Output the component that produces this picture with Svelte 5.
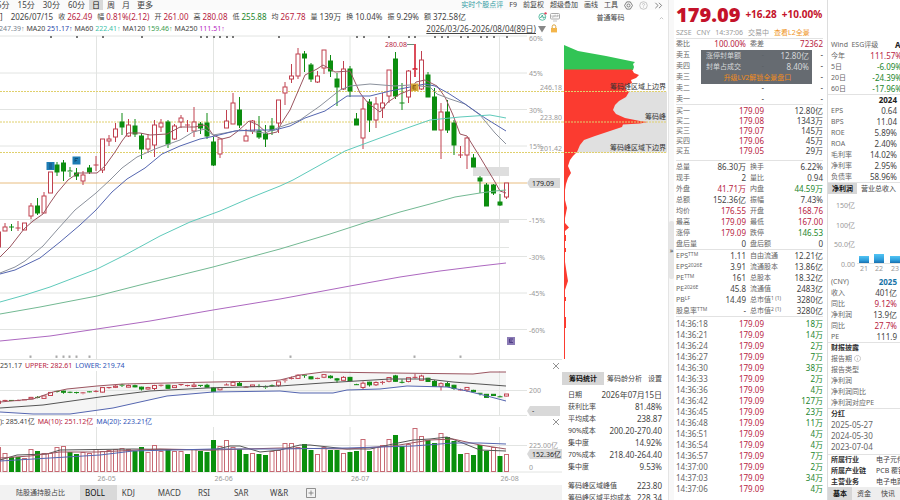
<script lang="ts">
	type Tone = 'up' | 'down' | '';

	const periods = ['5分', '15分', '30分', '60分', '日', '周', '月', '更多'];
	const tools = ['前复权', '超级叠加', '画线', '工具'];
	const indicators = ['BOLL', 'KDJ', 'MACD', 'RSI', 'SAR', 'W&R'];

	let period = $state('日');
	let indicator = $state('BOLL');
	let chipTab = $state('筹码统计');
	let profitTab = $state('净利润');
	let sideTab = $state('基本');

	const quoteFields: [string, string, Tone][] = [
		['收', '262.49', 'up'],
		['幅', '0.81%(2.12)', 'up'],
		['开', '261.00', 'up'],
		['高', '280.08', 'up'],
		['低', '255.88', 'down'],
		['均', '267.78', 'up'],
		['量', '139万', ''],
		['换', '10.04%', ''],
		['振', '9.29%', ''],
		['额', '372.58亿', '']
	];

	const averages = [
		['', '247.39', 'ma10'],
		['MA20', '251.17', 'ma20'],
		['MA60', '222.41', 'ma60'],
		['MA120', '159.46', 'ma120'],
		['MA250', '111.51', 'ma250']
	];

	// high, body top, body bottom, low, rising
	const candles: number[][] = [
		[232, 232, 247, 247, 1], [223, 227, 231, 231, 1], [224, 227, 227, 231, 0], [221, 228, 228, 231, 1],
		[223, 223, 230, 230, 1], [203, 206, 216, 219, 1], [198, 206, 213, 215, 0], [192, 196, 213, 213, 1],
		[172, 172, 193, 193, 1], [162, 165, 172, 176, 0], [160, 163, 171, 181, 0], [167, 171, 172, 177, 0],
		[168, 173, 176, 180, 0], [171, 175, 181, 185, 1], [165, 168, 172, 174, 0], [156, 165, 165, 171, 1],
		[139, 139, 170, 173, 1], [135, 139, 141, 146, 1], [123, 129, 137, 142, 1], [113, 122, 127, 135, 0],
		[119, 125, 136, 137, 1], [119, 126, 134, 137, 0], [133, 136, 149, 159, 0], [134, 139, 149, 153, 1],
		[120, 125, 145, 157, 1], [119, 123, 127, 132, 1], [120, 122, 144, 148, 0], [124, 126, 139, 140, 1],
		[115, 118, 122, 128, 1], [120, 125, 125, 132, 1], [107, 122, 131, 137, 1], [122, 124, 128, 134, 0],
		[113, 123, 136, 139, 0], [137, 142, 165, 166, 0], [139, 139, 154, 158, 1], [110, 121, 128, 128, 1],
		[93, 103, 124, 124, 1], [97, 110, 125, 128, 0], [129, 136, 141, 141, 1], [120, 121, 131, 134, 1],
		[116, 131, 137, 139, 0], [125, 134, 139, 147, 0], [118, 126, 130, 135, 0], [100, 100, 123, 133, 1],
		[82, 87, 93, 105, 1], [64, 76, 79, 83, 1], [48, 54, 76, 79, 1], [51, 54, 58, 72, 0],
		[63, 65, 79, 82, 0], [71, 76, 82, 83, 1], [50, 50, 68, 74, 1], [55, 61, 71, 77, 0],
		[73, 79, 87, 106, 0], [61, 69, 89, 90, 1], [66, 69, 91, 97, 0], [113, 119, 125, 125, 0],
		[97, 109, 138, 149, 1], [99, 102, 120, 132, 0], [97, 104, 120, 128, 1], [93, 103, 108, 118, 1],
		[70, 70, 96, 103, 1], [52, 59, 96, 99, 0], [83, 103, 103, 110, 0], [70, 71, 97, 103, 1],
		[44, 69, 70, 77, 1], [51, 60, 89, 90, 1], [72, 75, 97, 97, 0], [88, 97, 130, 130, 0],
		[103, 112, 130, 159, 1], [100, 112, 130, 133, 0], [120, 123, 145, 155, 0], [146, 155, 155, 158, 1],
		[137, 138, 155, 169, 1], [154, 158, 167, 167, 0], [176, 178, 181, 193, 0], [183, 185, 206, 206, 0],
		[184, 185, 193, 195, 0], [194, 202, 205, 206, 0], [183, 183, 197, 199, 1]
	];
	const peak = 64;

	// top edge of each volume bar, negative when the bar is a falling day
	const volumes = [
		447, 453, -457, -457, 458, 449, -451, 453, 453, 447, 446, -452, -454, 452, 453, 449, 451, 450, 449, 448,
		449, -451, -447, 452, 445, 451, -449, 451, 451, -454, 449, -451, -452, -440, 446, 440, 447, -449, -454, 453,
		-454, -455, 451, 450, 443, 443, 447, -444, -450, 454, 447, -450, -450, 453, -452, -451, 439, -451, 447, 445,
		439, -435, -446, 444, 428, 436, -440, -443, 433, -437, -441, -454, 453, -455, -445, -451, 447, -456, 454
	];

	const cx = (i: number) => Math.round((5 + 6.51 * (i - 1)) * 2) / 2;
	const mini = (y: number) => 367.3 + 0.146 * y;

	const monthLines = [96.5, 213.5, 350, 499.5];
	const months = ['26-05', '26-06', '26-07', '26-08'];
	const percents: [number, string][] = [
		[36, '60%'], [73, '45%'], [109.5, '30%'], [146, '15%'],
		[219.5, '-15%'], [256.5, '-30%'], [293, '-45%'], [329.5, '-60%']
	];
	const chipLevels: [number, string, string][] = [
		[91.5, '246.18', '筹码峰区域上边界'],
		[122, '223.80', '筹码峰'],
		[152.5, '201.42', '筹码峰区域下边界']
	];

	const topMarks = [50, 76, 102, 141, 200, 206, 213, 219, 226, 232, 278, 356, 363, 388, 408, 414, 434, 441, 447, 460, 467, 480, 486, 493, 506];
	const bottomMarks = [30, 56, 63, 69, 76, 89, 290, 414, 460];

	const mainLines = [
		['ma5', '0,257 10,247 24,229 33,221 43,214 50,203 57,193 68,180 78,173 97,173 105,166 115,152 122,141 128,133 140,133 150,135 167,134 180,127 195,127 203,125 207,126 213,135 222,139 230,137 238,131 249,121 258,125 268,134 277,132 281,124 290,110 305,75 317,69 323,65 335,72 350,71 360,93 368,103 380,112 388,102 400,94 410,90 416,82 425,80 437,86 445,97 453,115 460,134 467,136 480,157 495,182 500,191 506,193'],
		['ma10', '0,273 15,267 25,261 43,246 57,230 75,210 96,193 110,180 122,168 137,157 155,149 180,140 193,132 205,129 213,135 225,133 240,130 265,133 280,127 300,120 320,106 340,90 350,86 370,84 395,86 410,85 430,87 437,94 450,99 465,104 480,115 495,133 506,144'],
		['ma20', '0,274 15,270 40,258 60,242 80,225 96,210 112,192 127,179 145,168 162,154 180,146 200,139 215,136 235,131 255,130 275,130 290,126 305,118 325,111 347,96 370,96 390,91 410,87 425,84 435,86 448,93 465,104 485,118 506,131'],
		['ma60', '0,302 25,295 50,287 97,269 125,255 160,236 190,222 220,211 250,198 280,186 293,180 320,165 345,151 380,138 410,127 430,120 460,117 490,115 506,118'],
		['ma120', '0,314 40,307 97,296 140,285 213,267 280,249 330,234 370,221 400,212 430,204 455,197 480,193 495,191 506,190'],
		['ma250', '0,341 50,336 97,329 150,321 213,310 280,299 350,286 400,277 440,271 480,266 506,263']
	];

	const bollUpper = '0,402 33,399 53,392 67,389 97,386 123,384 213,382 270,381 280,380 300,375 323,372 393,373 473,374 490,372 506,372';
	const bollLower = '506,401 487,396 467,391 447,387 407,386 380,389 347,390 333,393 300,393 280,391 213,392 167,396 113,408 70,414 33,414 0,412';
	const bollMid = '0,408 43,405 100,397 150,391 207,388 280,386 323,383 390,379 427,379 453,382 506,386';

	const volumeLines = [
		['dark', '0,460 17,455 47,454 60,450 133,449 213,450 230,446 240,446 260,452 280,450 300,445 310,445 347,449 370,449 393,444 413,440 430,439 447,437 460,442 480,450 506,451'],
		['ma5', '0,458 30,456 60,452 97,452 160,449 213,450 280,448 347,449 393,446 430,440 453,439 480,445 506,449'],
		['ma20', '0,461 50,458 100,455 133,451 213,449 280,449 347,448 413,446 453,443 480,443 506,444']
	];

	const chipStats = [
		['日期', '2026年07月15日'],
		['获利比率', '81.48%'],
		['平均成本', '238.87'],
		['90%成本', '200.20-270.40'],
		['集中度', '14.92%'],
		['70%成本', '218.40-264.40'],
		['集中度', '9.53%'],
		['筹码峰区域峰值', '223.80'],
		['筹码峰区域平均成本', '228.34']
	];

	const asks = ['卖五', '卖四', '卖三', '卖二', '卖一'];
	const bids = [
		['买一', '179.09', '12.80亿'],
		['买二', '179.08', '1343万'],
		['买三', '179.07', '145万'],
		['买四', '179.06', '45万'],
		['买五', '179.05', '29万']
	];

	const trading: [string, string, Tone, string, string, Tone][] = [
		['总量', '86.30万', '', '换手', '6.22%', ''],
		['现手', '2', '', '量比', '0.94', ''],
		['外盘', '41.71万', 'up', '内盘', '44.59万', 'down'],
		['总额', '152.36亿', '', '振幅', '7.43%', ''],
		['均价', '176.55', 'up', '开盘', '168.76', 'up'],
		['最高', '179.09', 'up', '最低', '167.00', 'up'],
		['涨停', '179.09', 'up', '跌停', '146.53', 'down'],
		['盘后量', '0', '', '盘后额', '0', '']
	];

	// label, superscript, value, label, superscript, value
	const valuation = [
		['EPS', 'TTM', '1.11', '自由流通', '', '12.21亿'],
		['EPS', '2026E', '3.91', '流通股本', '', '13.86亿'],
		['PE', 'TTM', '161', '总股本', '', '18.32亿'],
		['PE', '2026E', '45.8', '流通值', '', '2483亿'],
		['PB', 'LF', '14.49', '总市值', '1 (1)', '3280亿'],
		['股息率', 'TTM', '-', '总市值', '2 (1)', '3280亿']
	];

	const ticks = [
		['14:36:18', '18万'], ['14:36:21', '14万'], ['14:36:24', '2万'], ['14:36:27', '7万'],
		['14:36:30', '38万'], ['14:36:33', '2万'], ['14:36:36', '4万'], ['14:36:42', '127万'],
		['14:36:45', '23万'], ['14:36:48', '11万'], ['14:36:51', '4万'], ['14:36:54', '4万'],
		['14:36:57', '7万'], ['14:37:00', '2万'], ['14:37:03', '34万'], ['14:37:06', '4万']
	];

	const returns: [string, string, Tone][] = [
		['今年', '111.57%', 'up'],
		['5日', '-6.09%', 'down'],
		['20日', '-24.39%', 'down'],
		['60日', '-17.96%', 'down']
	];
	const ratios = [
		['EPS', '0.64'],
		['BPS', '11.04'],
		['ROE', '5.89%'],
		['ROA', '2.40%'],
		['毛利率', '14.02%'],
		['净利率', '2.95%'],
		['负债率', '58.96%']
	];
	const forecast: [string, string, Tone][] = [
		['收入', '401亿', ''],
		['同比', '9.12%', 'up'],
		['净利润', '13.9亿', ''],
		['同比', '27.7%', 'up'],
		['PE', '111.9', '']
	];
	const reports = ['报告期', '报告类型', '净利润', '净利润同比', '净利润对应PE'];
	const dividends = ['2025-05-27', '2024-05-30', '2023-07-04'];
	const industry = [
		['所属行业', '电子元件'],
		['所属产业链', 'PCB 覆铜板'],
		['主营业务', '电子电路']
	];
</script>

<div class="terminal">
	<section class="charts">
		<nav class="toolbar">
			<div class="periods">
				{#each periods as p}
					<button class:active={period === p} onclick={() => (period = p)}>{p}</button>
				{/each}
			</div>
			<div class="tools">
				<button class="review">实时个股点评</button>
				<button>F9</button>
				{#each tools as t}
					<button>{t}</button>
				{/each}
				<button class="icon" aria-label="设置">
					<svg viewBox="0 0 10 10" width="9" height="9">
						<path d="M3 1h4l2.4 4L7 9H3L.6 5Z" />
						<circle cx="5" cy="5" r="1.7" />
					</svg>
				</button>
				<button class="icon faint" aria-label="帮助">
					<svg viewBox="0 0 10 10" width="9" height="9">
						<circle cx="5" cy="5" r="4.2" />
						<path d="M3.8 4q0-1.3 1.2-1.3T6.2 4q0 .7-1.2 1.3v.8M5 7v.7" />
					</svg>
				</button>
				<button class="icon" aria-label="展开">
					<svg viewBox="0 0 10 10" width="9" height="9"><path d="M1.5 2l3 3-3 3M5.5 2l3 3-3 3" /></svg>
				</button>
			</div>
		</nav>

		<div class="panes">
			<div class="chart-pane">
				<div class="info">
					<span>]</span>
					<span class="date">2026/07/15</span>
					{#each quoteFields as [label, value, tone]}
						<span class="field"><small>{label}</small><b class={tone}>{value}</b></span>
					{/each}
					<span class="info-icons">
						<svg viewBox="0 0 10 10" width="9" height="9">
							<circle cx="4.8" cy="5.4" r="3.8" fill="none" stroke="#4db79c" />
							<path d="M2.3 6h1.3l1.2-2.6L6 7l.6-1.2h1" fill="none" stroke="#3aa88b" />
							<circle cx="8.4" cy="1.5" r="1.3" fill="#e3445c" />
						</svg>
						<svg viewBox="0 0 10 10" width="10" height="10">
							<rect x=".5" y="1.5" width="9" height="5.5" rx="1" fill="none" stroke="#aaa" />
							<path d="M2 3.2v2h1.4v-2M4.6 5.2v-2h1.2v2M7 5.2v-2h1.2v1H7M3 9h4" fill="none" stroke="#aaa" stroke-width=".7" />
						</svg>
					</span>
				</div>

				<div class="averages">
					{#each averages as [name, value, cls]}
						<span>{name} <b class={cls}>{value}<i>↑</i></b></span>
					{/each}
					<button class="range">2026/03/26-2026/08/04(89日)</button>
					<svg class="caret" viewBox="0 0 8 8" width="8" height="8"><path d="M0 1h8L4 7.5Z" fill="#888" /></svg>
					<svg class="lock" viewBox="0 0 8 9" width="8" height="9">
						<path d="M2.2 4V2.6a1.8 1.8 0 0 1 3.6 0V4" fill="none" stroke="#d9a441" />
						<rect x="1" y="4" width="6" height="4.4" fill="#f3b54a" />
					</svg>
				</div>

				<svg class="plot" viewBox="0 34 562 326">
					{#each percents as [y, label]}
						<line class="grid" x1="0" x2="527" y1={y} y2={y} />
						<text class="axis" x="529" y={y < 40 ? y + 5 : y + 3}>{label}</text>
					{/each}
					{#each monthLines as x}
						<line class="grid" x1={x} x2={x} y1="36" y2="359" />
					{/each}
					<line class="grid" x1="0" x2="562" y1="359.5" y2="359.5" />
					<rect class="band" x="30" y="219" width="479" height="4" />
					<rect class="band" x="473" y="167" width="36" height="9" />
					<line class="grid" x1="0" x2="509" y1="247.5" y2="247.5" />
					{#each chipLevels as [y, price]}
						<line class="level" x1="0" x2="562" y1={y} y2={y} />
						<text class="axis" x="562" y={y - 2} text-anchor="end">{price}</text>
					{/each}
					<line class="current" x1="0" x2="527" y1="183" y2="183" />

					{#each topMarks as x}
						<rect class="mark" {x} y="36" width="2" height="2" />
					{/each}
					{#each bottomMarks as x}
						<rect class="dot" x={x - 0.5} y="355.5" width="2" height="2.4" />
					{/each}

					{#each candles as [high, top, bottom, low, rising], i}
						<g class={i === peak ? 'peak' : rising ? 'rise' : 'fall'}>
							<line x1={cx(i)} x2={cx(i)} y1={high} y2={top} />
							<line x1={cx(i)} x2={cx(i)} y1={bottom} y2={low} />
							{#if bottom - top < 2}
								<line x1={cx(i) - 2.5} x2={cx(i) + 2.5} y1={top} y2={top} />
							{:else}
								<rect x={cx(i) - 2} y={top} width="4" height={bottom - top} />
							{/if}
						</g>
					{/each}

					{#each mainLines as [cls, points]}
						<polyline class={cls} {points} />
					{/each}

					<g class="event">
						<rect x="46.5" y="162" width="8" height="8" />
						<path d="M49 164h3M49 166h3M49 168h3" />
						<rect x="72.5" y="156.5" width="8" height="8" />
						<path d="M75 162v-3.5h3M75 160.5h2" />
					</g>
					<g class="event gold">
						<rect x="411" y="83.5" width="7.5" height="7.5" />
						<path d="M416 85.5h-3v3.5h3M413 87h2.5" />
					</g>
					<g class="event purple">
						<rect x="507" y="337" width="8" height="8" />
						<path d="M513 339h-3.5v3.5h3.5M510 341h2" />
					</g>

					<text class="high" x="385" y="47">280.08</text>
					<line class="high-line" x1="407" x2="414" y1="44.5" y2="44.5" />

					<path class="tag" d="M527 183l3-5h30v10h-30z" />
					<text class="tag-text" x="532" y="186">179.09</text>
				</svg>

				<div class="legend">
					<span>251.17</span>
					<span class="up">UPPER: 282.61</span>
					<span class="blue">LOWER: 219.74</span>
					<button class="close" aria-label="关闭 BOLL">
						<svg viewBox="0 0 8 8" width="8" height="8"><path d="M1 1l6 6M7 1L1 7" /></svg>
					</button>
				</div>

				<svg class="plot" viewBox="0 371 562 45">
					<polygon class="cloud" points="{bollUpper} {bollLower}" />
					<line class="grid" x1="0" x2="527" y1="390.5" y2="390.5" />
					{#each monthLines as x}
						<line class="grid" x1={x} x2={x} y1="371" y2="416" />
					{/each}
					<line class="grid" x1="0" x2="527" y1="415.5" y2="415.5" />
					{#each candles as [high, top, bottom, low, rising], i}
						<g class={rising ? 'rise' : 'fall'}>
							<line x1={cx(i)} x2={cx(i)} y1={mini(high)} y2={mini(top)} />
							<line x1={cx(i)} x2={cx(i)} y1={mini(bottom)} y2={mini(low)} />
							{#if bottom - top < 8}
								<line x1={cx(i) - 2.5} x2={cx(i) + 2.5} y1={mini(top)} y2={mini(top)} />
							{:else}
								<rect x={cx(i) - 2} y={mini(top)} width="4" height={mini(bottom) - mini(top)} />
							{/if}
						</g>
					{/each}
					<polyline class="ma5" points={bollUpper} />
					<polyline class="dark" points={bollMid} />
					<polyline class="ma20" points={bollLower} />
					<text class="axis" x="529" y="393">200</text>
					<path class="tag" d="M527 411l3-5h30v10h-30z" />
					<text class="tag-text" x="532" y="413">-</text>
				</svg>

				<div class="legend">
					<span>): 285.41亿</span>
					<span class="up">MA(10): 251.12亿</span>
					<span class="blue">MA(20): 223.21亿</span>
					<button class="close" aria-label="关闭成交额">
						<svg viewBox="0 0 8 8" width="8" height="8"><path d="M1 1l6 6M7 1L1 7" /></svg>
					</button>
				</div>

				<svg class="plot" viewBox="0 427 562 58">
					<line class="grid" x1="0" x2="527" y1="445.5" y2="445.5" />
					{#each monthLines as x, i}
						<line class="grid" x1={x} x2={x} y1="427" y2="472" />
						<text class="axis" x={x + 1} y="481">{months[i]}</text>
					{/each}
					<line class="grid" x1="0" x2="562" y1="472" y2="472" />
					{#each volumes as v, i}
						<rect
							class={v > 0 ? 'bar rise' : 'bar fall'}
							x={cx(i) - 2}
							y={Math.abs(v) + 0.5}
							width="4"
							height={471 - Math.abs(v)}
						/>
					{/each}
					{#each volumeLines as [cls, points]}
						<polyline class={cls} {points} />
					{/each}
					<text class="axis" x="529" y="448">225.00亿</text>
					<text class="axis" x="529" y="470">0</text>
					<path class="tag" d="M527 454l3-5h32v10h-32z" />
					<text class="tag-text" x="532" y="457">152.36亿</text>
				</svg>

				<nav class="indicators">
					<button class="first">陆股通持股占比</button>
					{#each indicators as name}
						<button class:active={indicator === name} onclick={() => (indicator = name)}>{name}</button>
					{/each}
					<button class="add" aria-label="添加指标">
						<svg viewBox="0 0 10 10" width="10" height="10"><path d="M.5.5h9v9h-9zM5 2.5v5M2.5 5h5" /></svg>
					</button>
				</nav>
			</div>

			<aside class="chips">
				<header>
					<span>普通筹码</span>
					<svg viewBox="0 0 6 6" width="5" height="5"><path d="M1 5l2-2 2 2" fill="none" stroke="#bbb" /></svg>
				</header>
				<svg class="plot" viewBox="562 24 106 348">
					<rect class="zone" x="564" y="91.5" width="103" height="61" />
					<path
						class="chip-green"
						d="M564 45L571 48 578 51 606 56 635 62 633 64 634 67 633 70H564Z"
					/>
					<path
						class="chip-red"
						d="M564 69.5H632L634 73 639 75 636 78 631 80 632 83 625 86 626 90 629 92 626 97 619 101 615 105 613 110 616 114 625 118 640 121 648 122 640 123.5 623 124.5 622 127 610 131 595 136 584 140 580 145 577 152 573 156 570 160 568 166 571 173 568 178 566 184 565 190V200L567 208 565 218V223L569 227.500 565 231V235H566V241H565V248H566V252H565V262L567 275 568 281 565 290V297H566V301H565V317H566V328H565V359H564Z"
					/>
					{#each chipLevels as [y, , label]}
						<line class="level" x1="562" x2="667" y1={y} y2={y} />
						<text class="chip-label" x="666" y={y - 3} text-anchor="end">{label}</text>
					{/each}
				</svg>
				<nav class="chip-tabs">
					{#each ['筹码统计', '筹码龄分析', '设置'] as tab}
						<button class:active={chipTab === tab} onclick={() => (chipTab = tab)}>{tab}</button>
					{/each}
				</nav>
				<table class="chip-table">
					<tbody>
						{#each chipStats as [label, value], i}
							<tr class:spaced={i === 7}>
								<th>{label}</th>
								<td>{value}</td>
							</tr>
						{/each}
					</tbody>
				</table>
			</aside>
		</div>
	</section>

	<div class="splitter"><button aria-label="收起">»</button></div>

	<section class="quote">
		<div class="price">
			<strong>179.09</strong>
			<span>+16.28</span>
			<span>+10.00%</span>
		</div>
		<div class="status">
			<span>SZSE</span><span>CNY</span><span>14:37:06</span><span>交易中</span>
			<a href="#l2">查看L2全景</a>
		</div>

		<div class="book">
			<table class="pairs head">
				<tbody>
					<tr>
						<th>委比</th>
						<td class="up">100.00%</td>
						<th>委差</th>
						<td class="up">72362</td>
					</tr>
				</tbody>
			</table>
			<table class="depth">
				<tbody>
					{#each asks as label}
						<tr>
							<th>{label}</th>
							<td>-</td>
							<td>-</td>
						</tr>
					{/each}
				</tbody>
			</table>
			<div class="tooltip">
				<p><span>涨停封单额</span><span>12.80亿</span></p>
				<p><span>封单占成交</span><span>8.40%</span></p>
				<a href="#lv2">升级LV2解锁全景盘口</a>
			</div>
		</div>
		<table class="depth bids">
			<tbody>
				{#each bids as [label, price, size]}
					<tr>
						<th>{label}</th>
						<td class="up">{price}</td>
						<td>{size}</td>
					</tr>
				{/each}
			</tbody>
		</table>
		<table class="pairs">
			<tbody>
				{#each trading as [l1, v1, t1, l2, v2, t2]}
					<tr>
						<th>{l1}</th>
						<td class={t1}>{v1}</td>
						<th>{l2}</th>
						<td class={t2}>{v2}</td>
					</tr>
				{/each}
			</tbody>
		</table>
		<table class="pairs">
			<tbody>
				{#each valuation as [l1, s1, v1, l2, s2, v2]}
					<tr>
						<th>{l1}<sup>{s1}</sup></th>
						<td>{v1}</td>
						<th>{l2}<sup>{s2}</sup></th>
						<td>{v2}</td>
					</tr>
				{/each}
			</tbody>
		</table>
		<table class="depth ticks">
			<tbody>
				{#each ticks as [time, size]}
					<tr>
						<td>{time}</td>
						<td class="up">179.09</td>
						<td class="down">{size}</td>
					</tr>
				{/each}
			</tbody>
		</table>
	</section>

	<aside class="side">
		<div class="group esg">
			<div class="row"><span>Wind&ensp;ESG评级</span><b>AA</b></div>
			{#each returns as [label, value, tone]}
				<div class="row"><span>{label}</span><em class={tone}>{value}</em></div>
			{/each}
		</div>
		<div class="group">
			<div class="row"><span></span><b>2024</b></div>
			{#each ratios as [label, value]}
				<div class="row"><span>{label}</span><em>{value}</em></div>
			{/each}
		</div>
		<nav class="profit-tabs">
			{#each ['净利润', '营业总收入'] as tab}
				<button class:active={profitTab === tab} onclick={() => (profitTab = tab)}>{tab}</button>
			{/each}
		</nav>
		<svg class="profit" viewBox="828 193 72 82">
			<defs>
				<linearGradient id="bar" x1="0" x2="0" y1="0" y2="1">
					<stop offset="0" stop-color="#52c4f4" />
					<stop offset="0.6" stop-color="#2f9fdc" />
					<stop offset="1" stop-color="#1a6fae" />
				</linearGradient>
			</defs>
			<text class="axis" x="855" y="207" text-anchor="end">150亿</text>
			<text class="axis" x="855" y="227" text-anchor="end">100亿</text>
			<text class="axis" x="855" y="246" text-anchor="end">50.0亿</text>
			<text class="axis" x="855" y="266" text-anchor="end">0.00</text>
			<line class="grid" x1="857" x2="900" y1="262.5" y2="262.5" />
			<rect x="859" y="255" width="10" height="7" fill="url(#bar)" />
			<rect x="874" y="253" width="10" height="9" fill="url(#bar)" />
			<rect x="890" y="255" width="10" height="7" fill="url(#bar)" />
			<text class="axis" x="864" y="270" text-anchor="middle">21</text>
			<text class="axis" x="879" y="270" text-anchor="middle">22</text>
			<text class="axis" x="895" y="270" text-anchor="middle">23</text>
		</svg>
		<div class="group">
			<div class="row"><span>(CNY)</span><b class="year">2025</b></div>
			{#each forecast as [label, value, tone]}
				<div class="row"><span>{label}</span><em class={tone}>{value}</em></div>
			{/each}
		</div>
		<div class="group">
			<h3>财报披露</h3>
			{#each reports as label, i}
				<div class="row">
					<span>
						{label}
						{#if i === 0}
							<svg viewBox="0 0 8 8" width="7" height="7">
								<path d="M4 .5a3.500 3.500 0 1 0 .01 0ZM4 3.500V6M4 2v.6" fill="none" stroke="#aaa" stroke-width=".7" />
							</svg>
						{/if}
					</span>
				</div>
			{/each}
		</div>
		<div class="group dividends">
			<h3>分红</h3>
			{#each dividends as date}
				<div class="row"><em>{date}</em></div>
			{/each}
		</div>
		<div class="group industry">
			{#each industry as [label, value]}
				<div class="row"><h3>{label}</h3><span>{value}</span></div>
			{/each}
		</div>
		<nav class="side-tabs">
			{#each ['基本', '资金', '快讯'] as tab}
				<button class:active={sideTab === tab} onclick={() => (sideTab = tab)}>{tab}</button>
			{/each}
		</nav>
	</aside>
</div>

<style>
	:global(body) {
		margin: 0;
		background: #fff;
		overflow: hidden;
	}

	.terminal {
		display: grid;
		grid-template-columns: minmax(0, 1fr) 6px 154px 72px;
		height: 100vh;
		overflow: hidden;
		font-family: 'Noto Sans', 'Noto Sans CJK SC', sans-serif;
		font-size: 8px;
		line-height: 11px;
		color: #444;
		white-space: nowrap;
	}

	button {
		padding: 0;
		border: 0;
		background: none;
		font: inherit;
		color: inherit;
		cursor: pointer;
		white-space: nowrap;
	}

	a {
		text-decoration: none;
	}

	b,
	em,
	i,
	small {
		font: inherit;
	}

	.up {
		color: #b8243f;
	}

	.down {
		color: #23862b;
	}

	.blue {
		color: #2f55b8;
	}

	.charts {
		display: flex;
		flex-direction: column;
		min-width: 0;
		min-height: 0;
		overflow: hidden;
	}

	.toolbar {
		display: flex;
		justify-content: space-between;
		height: 10px;
		line-height: 10px;
		background: #fafafa;
	}

	.periods,
	.tools {
		display: flex;
	}

	.periods button {
		padding: 0 4px;
		font-size: 8px;
	}

	.periods button:first-child {
		margin-left: -7px;
	}

	.periods button:nth-child(n + 5) {
		padding: 0 3px;
		margin-right: 1px;
	}

	.periods button.active {
		background: #d9d9d9;
		color: #111;
	}

	.tools {
		gap: 6px;
		padding-right: 5px;
		font-size: 7px;
	}

	.tools .review {
		color: #2e9aa3;
	}

	.tools .icon {
		display: flex;
		align-items: center;
	}

	.tools .icon svg {
		fill: none;
		stroke: #666;
		stroke-width: 0.9;
	}

	.tools .faint svg {
		stroke: #bbb;
	}

	.panes {
		display: grid;
		grid-template-columns: minmax(0, 562fr) minmax(0, 106fr);
		flex: 1;
		min-height: 0;
	}

	.chart-pane {
		display: flex;
		flex-direction: column;
		min-width: 0;
	}

	.plot {
		display: block;
		width: 100%;
		height: auto;
		flex: none;
	}

	.info {
		display: flex;
		gap: 5px;
		height: 13px;
		line-height: 13px;
	}

	.date {
		margin-left: 3px;
	}

	.field {
		display: flex;
		gap: 2px;
	}

	.field small {
		font-size: 7px;
	}

	.info-icons {
		display: flex;
		gap: 3px;
		align-items: center;
		margin-left: auto;
		padding-right: 2px;
	}

	.averages {
		display: flex;
		gap: 2px;
		height: 11px;
		font-size: 7px;
		align-items: center;
	}

	.averages span:first-child {
		margin-left: -1px;
	}

	.averages i {
		font-family: 'Liberation Sans', sans-serif;
	}

	.range {
		margin-left: auto;
		font-size: 8px;
		line-height: 9px;
		text-decoration: underline;
	}

	.lock {
		margin: 0 4px 0 2px;
	}

	.ma5 {
		color: #9b5560;
		stroke: #9b5560;
	}

	.ma10 {
		color: #76818c;
		stroke: #8b919c;
	}

	.ma20 {
		color: #2743a8;
		stroke: #5566b0;
	}

	.ma60 {
		color: #3dbfa9;
		stroke: #5fcabb;
	}

	.ma120 {
		color: #3c9e50;
		stroke: #73b993;
	}

	.ma250 {
		color: #b526c1;
		stroke: #ad68c0;
	}

	.dark {
		stroke: #555;
	}

	polyline {
		fill: none;
		stroke-width: 1;
	}

	.grid {
		stroke: #e2e4e2;
		stroke-width: 1;
	}

	.band {
		fill: #dedede;
	}

	.level {
		stroke: #e0d06c;
		stroke-width: 1;
		stroke-dasharray: 2 1;
	}

	.current {
		stroke: #e8bd80;
		stroke-width: 1;
	}

	.axis {
		font-size: 7px;
		fill: #999;
	}

	.mark {
		fill: #777;
	}

	.dot {
		fill: #aaa;
	}

	.rise line,
	.rise rect {
		stroke: #c0404f;
		fill: #fff;
		stroke-width: 1;
	}

	.fall line,
	.fall rect {
		stroke: #0f8a12;
		fill: #0a900d;
		stroke-width: 1;
	}

	.peak line,
	.peak rect {
		stroke: #d01224;
		fill: #d01224;
		stroke-width: 1.5;
	}

	.bar.rise {
		stroke: #c76a74;
		fill: #fff;
	}

	.bar.fall {
		stroke: #0a900d;
		fill: #0a900d;
	}

	.event rect {
		fill: #1e7cb4;
	}

	.event path {
		fill: none;
		stroke: #0c4770;
		stroke-width: 0.8;
	}

	.gold rect {
		fill: #d6a63c;
	}

	.gold path {
		stroke: #7c5510;
	}

	.purple rect {
		fill: #8b7bb5;
	}

	.purple path {
		stroke: #43307c;
	}

	.high {
		font-size: 7px;
		fill: #b8243f;
	}

	.high-line {
		stroke: #66907a;
	}

	.tag {
		fill: #d9d9d9;
	}

	.tag-text {
		font-size: 7px;
		fill: #222;
	}

	.cloud {
		fill: #f5f5f5;
	}

	.legend {
		display: flex;
		gap: 3px;
		height: 11px;
		font-size: 7px;
	}

	.close {
		display: flex;
		align-items: center;
		margin: 0 2px 0 auto;
	}

	.close path,
	.add path {
		fill: none;
		stroke: #777;
		stroke-width: 0.8;
	}

	.indicators {
		display: flex;
		flex: 1;
		min-height: 15px;
		background: #f2f2f2;
	}

	.indicators button {
		min-width: 36px;
		padding: 0 12px 0 5px;
		text-align: left;
	}

	.indicators .first {
		padding: 0 15px 0 16px;
		font-size: 7px;
	}

	.indicators .active {
		background: #d9d9d9;
		color: #111;
	}

	.indicators .add {
		display: flex;
		align-items: center;
	}

	.chips {
		display: flex;
		flex-direction: column;
		min-width: 0;
		min-height: 0;
		overflow: hidden;
		font-size: 7px;
	}

	.chips header {
		display: grid;
		grid-template-columns: 1fr auto;
		flex: none;
		align-items: center;
		height: 14px;
		padding-right: 4px;
		text-align: center;
	}

	.zone {
		fill: #e0e0e0;
	}

	.chip-green {
		fill: #32c455;
	}

	.chip-red {
		fill: #fb3b30;
	}

	.chip-label {
		font-size: 7px;
		fill: #333;
	}

	.chip-tabs {
		display: flex;
		flex: none;
		height: 13px;
		line-height: 13px;
		margin-bottom: 4px;
	}

	.chip-tabs button {
		padding: 0 3px;
	}

	.chip-tabs .active {
		padding: 0 7px;
		background: #d6d6d6;
		color: #111;
		font-weight: bold;
	}

	table {
		width: 100%;
		border-collapse: collapse;
		table-layout: fixed;
	}

	th,
	td {
		padding: 0;
		font-weight: normal;
		text-align: right;
	}

	th {
		font-size: 7px;
		text-align: left;
		color: #666;
	}

	.chip-table {
		display: block;
		box-sizing: border-box;
		padding: 0 6px;
		line-height: 12px;
	}

	.chip-table tbody {
		display: block;
	}

	.chip-table tr {
		display: flex;
		justify-content: space-between;
	}

	.chip-table th {
		color: #444;
	}

	.chip-table td {
		font-size: 8px;
	}

	.chip-table .spaced {
		padding-top: 7px;
	}

	.splitter {
		display: flex;
		align-items: center;
		border-left: 1px solid #e4e4e4;
		background: #f8f8f8;
	}

	.splitter button {
		width: 100%;
		height: 58px;
		background: #e6e6e6;
		border-radius: 2px;
		font-size: 7px;
	}

	.quote {
		min-width: 0;
		padding: 0 4px 0 2px;
		border-right: 1px solid #ddd;
		overflow: hidden;
	}

	.price {
		display: flex;
		align-items: center;
		gap: 5px;
		height: 28px;
		padding-top: 1px;
		box-sizing: border-box;
		font-size: 10px;
		font-weight: bold;
		color: #c4122a;
	}

	.price strong {
		font-size: 20px;
	}

	.status {
		display: flex;
		gap: 5px;
		height: 10px;
		line-height: 10px;
		font-size: 7px;
		color: #999;
		border-bottom: 1px solid #e2e2e2;
	}

	.status a {
		color: #ef9526;
	}

	.book {
		position: relative;
	}

	.pairs {
		border-bottom: 1px solid #e2e2e2;
	}

	.pairs.head {
		border: 0;
		line-height: 10px;
	}

	.pairs th:first-child {
		width: 32px;
	}

	.pairs td {
		width: 38px;
	}

	.pairs th:nth-child(3) {
		width: 34px;
		padding-left: 4px;
	}

	.pairs td:last-child {
		width: auto;
	}

	.pairs sup {
		font-size: 5px;
		line-height: 0;
		vertical-align: 2px;
	}

	.depth {
		border-bottom: 1px solid #e2e2e2;
	}

	.depth td:nth-child(2) {
		width: 53px;
	}

	.depth > tbody > tr > :first-child {
		width: 35px;
		text-align: left;
		color: #666;
	}

	.bids {
		border-collapse: separate;
		border-spacing: 0;
		padding: 1px 0 4px;
		line-height: 10px;
	}

	.ticks {
		border: 0;
		padding-top: 1px;
		border-collapse: separate;
		border-spacing: 0;
	}

	.tooltip {
		position: absolute;
		top: 11px;
		left: 25px;
		width: 111px;
		height: 34px;
		padding: 0 3px 0 5px;
		box-sizing: border-box;
		background: rgba(92, 98, 104, 0.94);
		color: #d5d8da;
		text-align: center;
	}

	.tooltip p {
		display: flex;
		justify-content: space-between;
		margin: 0;
	}

	.tooltip p span:first-child,
	.tooltip a {
		font-size: 7px;
	}

	.tooltip a {
		display: block;
		color: #f08b1d;
	}

	.side {
		display: flex;
		flex-direction: column;
		min-width: 0;
		padding-top: 39px;
		overflow: hidden;
	}

	.group {
		padding: 0 3px;
		border-bottom: 1px solid #e2e2e2;
		box-sizing: border-box;
		font-size: 7px;
		color: #666;
	}

	.group + .group {
		margin-top: -1px;
	}

	.row {
		display: flex;
		justify-content: space-between;
		height: 11px;
	}

	.row em {
		font-size: 8px;
		color: #444;
	}

	.row em.up {
		color: #b8243f;
	}

	.row em.down {
		color: #23862b;
	}

	.row b {
		font-size: 8px;
		font-weight: bold;
		color: #222;
	}

	.row b.year {
		color: #1a74a8;
	}

	.row svg {
		vertical-align: -1px;
	}

	.esg {
		padding: 0 0 0 3px;
	}

	.esg .row em {
		margin-right: -2px;
	}

	.esg .row b {
		margin-right: -6px;
	}

	h3 {
		margin: 0;
		font-size: 7px;
		line-height: 11px;
		font-weight: bold;
		color: #333;
	}

	.profit-tabs,
	.side-tabs {
		display: flex;
		flex: none;
		height: 11px;
		font-size: 7px;
	}

	.profit-tabs button,
	.side-tabs button {
		padding: 0 4px;
	}

	.profit-tabs .active,
	.side-tabs .active {
		background: #d6d6d6;
		color: #111;
		font-weight: bold;
	}

	.profit {
		display: block;
		width: 100%;
		height: auto;
		flex: none;
	}

	.dividends {
		padding-bottom: 2px;
	}

	.dividends .row em {
		color: #666;
	}

	.industry {
		border: 0;
	}

	.industry .row {
		justify-content: flex-start;
	}

	.industry h3 {
		flex: none;
		width: 45px;
	}

	.industry span {
		color: #444;
	}

	.side-tabs {
		height: 14px;
		margin-top: auto;
		line-height: 14px;
		background: #eee;
	}

	.side-tabs button {
		flex: 1;
	}
</style>
